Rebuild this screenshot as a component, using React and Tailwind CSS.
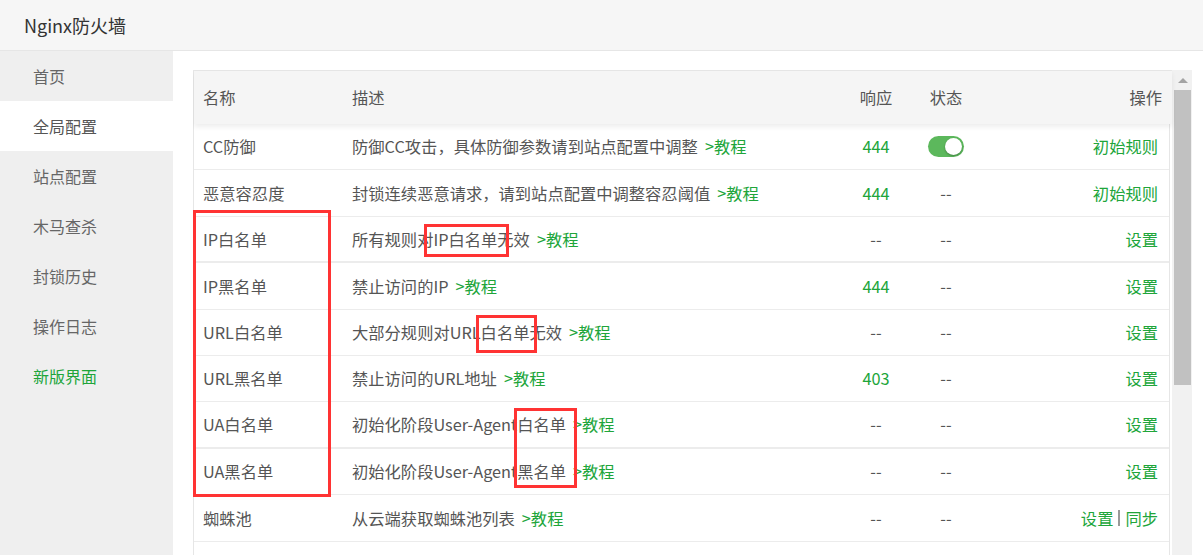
import React from 'react';

const menu = ['首页', '全局配置', '站点配置', '木马查杀', '封锁历史', '操作日志', '新版界面'];

const rules = [
  { name: 'CC防御', desc: '防御CC攻击，具体防御参数请到站点配置中调整', resp: '444', toggle: true, ops: ['初始规则'] },
  { name: '恶意容忍度', desc: '封锁连续恶意请求，请到站点配置中调整容忍阈值', resp: '444', ops: ['初始规则'] },
  { name: 'IP白名单', desc: '所有规则对IP白名单无效', resp: '--', ops: ['设置'], thick: true },
  { name: 'IP黑名单', desc: '禁止访问的IP', resp: '444', ops: ['设置'] },
  { name: 'URL白名单', desc: '大部分规则对URL白名单无效', resp: '--', ops: ['设置'] },
  { name: 'URL黑名单', desc: '禁止访问的URL地址', resp: '403', ops: ['设置'] },
  { name: 'UA白名单', desc: '初始化阶段User-Agent白名单', resp: '--', ops: ['设置'], thick: true },
  { name: 'UA黑名单', desc: '初始化阶段User-Agent黑名单', resp: '--', ops: ['设置'] },
  { name: '蜘蛛池', desc: '从云端获取蜘蛛池列表', resp: '--', ops: ['设置', '同步'] },
];

function Toggle() {
  return (
    <span className="inline-flex h-[21px] w-[36px] items-center justify-end rounded-full bg-[#5cb85c] pr-[2px]">
      <span className="h-[17px] w-[17px] rounded-full bg-white shadow-[0_1px_2px_rgba(0,0,0,0.3)]" />
    </span>
  );
}

function Row({ rule }) {
  const border = rule.thick ? 'border-b-2' : 'border-b';
  return (
    <div className={`flex h-[46.4px] items-center ${border} border-[#ececec] text-[16.3px] text-[#555]`}>
      <div className="w-[149px] pl-[9px]">{rule.name}</div>
      <div className="w-[498px] pl-[9px] whitespace-nowrap">
        {rule.desc}
        <span className="ml-[7px] text-[#20a53a]">&gt;教程</span>
      </div>
      <div className={`w-[70px] text-center ${rule.resp === '--' ? 'text-[#555]' : 'text-[#20a53a]'}`}>{rule.resp}</div>
      <div className="flex w-[70px] justify-center">{rule.toggle ? <Toggle /> : '--'}</div>
      <div className="flex flex-1 justify-end pr-[11px] text-[#20a53a]">
        {rule.ops.map((op, i) => (
          <span key={op} className="flex items-center">
            {i > 0 && <span className="mx-[5px] h-[16px] w-[2px] bg-[#999]" />}
            {op}
          </span>
        ))}
      </div>
    </div>
  );
}

export default function App() {
  return (
    <div className="relative h-screen overflow-hidden bg-white font-['Noto_Sans_CJK_SC',sans-serif]">
      <div className="flex h-[51px] items-center border-b border-[#e6e6e6] bg-[#f6f6f6] pl-[24px] text-[18px] text-[#333]">
        Nginx防火墙
      </div>

      <div className="flex h-[504px]">
        <div className="w-[173px] shrink-0 bg-[#efefef]">
          {menu.map((item, i) => {
            let tone = 'text-[#666]';
            if (i === 1) tone = 'bg-white text-[#555]';
            if (i === 6) tone = 'text-[#20a53a]';
            return (
              <div key={item} className={`flex h-[50px] items-center pl-[33px] text-[16px] ${tone}`}>
                {item}
              </div>
            );
          })}
        </div>

        <div className="flex flex-1 pl-[20px] pt-[19px] pr-[11px]">
          <div className="flex flex-1 overflow-hidden">
            <div className="flex-1 border-l border-t border-[#e6e6e6]">
              <div className="relative z-10 flex h-[53px] items-center bg-[#f5f5f5] text-[16.3px] text-[#555] shadow-[0_3px_5px_rgba(0,0,0,0.07)]">
                <div className="w-[149px] pl-[9px]">名称</div>
                <div className="w-[498px] pl-[9px]">描述</div>
                <div className="w-[70px] text-center">响应</div>
                <div className="w-[70px] text-center">状态</div>
                <div className="flex-1 pr-[10px] text-right">操作</div>
              </div>
              <div className="mr-[2px] border-r border-[#e6e6e6]">
                {rules.map((rule) => (
                  <Row key={rule.name} rule={rule} />
                ))}
                <div className="h-[46.4px]" />
              </div>
            </div>
            <div className="flex w-[20px] shrink-0 flex-col items-center bg-[#f1f1f1] pl-[1px]">
              <div className="flex h-[20px] items-center">
                <span className="h-0 w-0 border-x-[5px] border-b-[5px] border-x-transparent border-b-[#a3a3a3]" />
              </div>
              <div className="h-[295px] w-[17px] bg-[#c1c1c1]" />
            </div>
          </div>
        </div>
      </div>

      <div className="pointer-events-none absolute left-[193px] top-[210px] h-[287px] w-[138px] border-[3px] border-[#f33]" />
      <div className="pointer-events-none absolute left-[424px] top-[224px] h-[33px] w-[85px] border-[3px] border-[#f33]" />
      <div className="pointer-events-none absolute left-[476px] top-[315px] h-[38px] w-[61px] border-[3px] border-[#f33]" />
      <div className="pointer-events-none absolute left-[514px] top-[408px] h-[80px] w-[63px] border-[3px] border-[#f33]" />
    </div>
  );
}
